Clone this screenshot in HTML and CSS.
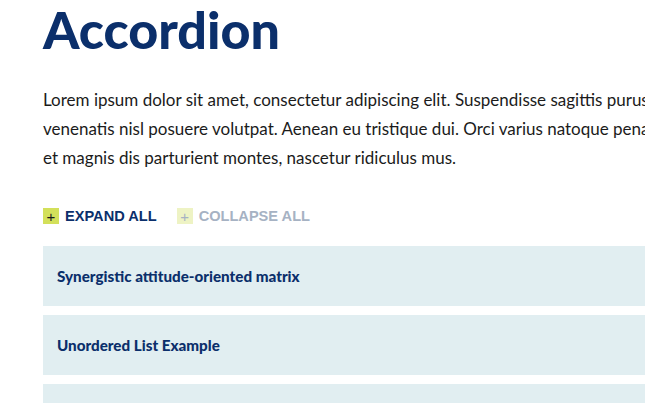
FILE: index.html
```html
<!DOCTYPE html>
<html lang="en">
<head>
    <meta charset="UTF-8">
    <meta name="viewport" content="width=device-width, initial-scale=1.0">
    <title>Accordion</title>
    <link rel="stylesheet" href="styles.css">
</head>
<body>

    <main class="page">
        <h1 class="title">Accordion</h1>

        <p class="intro">Lorem ipsum dolor sit amet, consectetur adipiscing elit. Suspendisse sagittis purus ex venenatis nisl posuere volutpat. Aenean eu tristique dui. Orci varius natoque penatibus et magnis dis parturient montes, nascetur ridiculus mus.</p>

        <div class="controls">
            <button type="button" class="control"><span class="control-icon">+</span>Expand all</button>
            <button type="button" class="control is-muted"><span class="control-icon">+</span>Collapse all</button>
        </div>

        <div class="accordion">
            <div class="accordion-item">Synergistic attitude-oriented matrix</div>
            <div class="accordion-item">Unordered List Example</div>
            <div class="accordion-item">Ordered List Example</div>
        </div>
    </main>

</body>
</html>
```

FILE: styles.css
```css
body {
    margin: 0;
    overflow: hidden;
    font-family: Lato, "Noto Sans", sans-serif;
    color: #1b1b1b;
    background: #fff;
}
.page {
    width: 760px;
    padding: 0 0 0 43px;
}
.title {
    margin: 0;
    font-size: 52px;
    font-weight: 900;
    line-height: 58px;
    color: #0b2f6b;
}
.intro {
    max-width: 650px;
    margin: 27px 0 0;
    font-size: 17px;
    line-height: 29px;
}
.controls {
    display: flex;
    gap: 20px;
    margin-top: 36px;
}
.control {
    display: flex;
    align-items: center;
    gap: 6px;
    padding: 0;
    border: none;
    background: none;
    font-family: "Liberation Sans", Arial, sans-serif;
    font-size: 14.6px;
    font-weight: bold;
    text-transform: uppercase;
    color: #0b2f6b;
    cursor: pointer;
}
.control-icon {
    display: flex;
    align-items: center;
    justify-content: center;
    width: 16px;
    height: 16px;
    background: #d3e05a;
    color: #1b1b1b;
    font-weight: normal;
    font-size: 15px;
    line-height: 1;
}
.control.is-muted {
    color: #a6b2c3;
}
.control.is-muted .control-icon {
    background: #eef3c4;
    color: #a6b2c3;
}
.accordion {
    display: flex;
    flex-direction: column;
    gap: 9px;
    margin-top: 22px;
}
.accordion-item {
    padding: 21px 14px;
    background: #e1eef1;
    font-size: 15.2px;
    font-weight: 900;
    line-height: 18px;
    color: #0b2f6b;
}
```
